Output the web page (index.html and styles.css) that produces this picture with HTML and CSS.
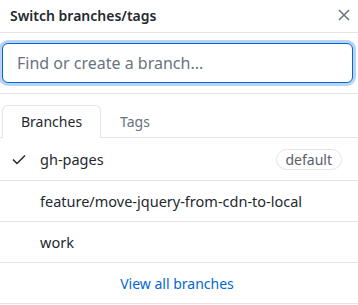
FILE: index.html
```html
<!DOCTYPE html>
<html lang="en">
<head>
  <meta charset="UTF-8">
  <title>Switch branches/tags</title>
  <link rel="stylesheet" href="styles.css">
</head>
<body>
  <div class="select-menu">
    <header class="menu-header">
      <span class="menu-title">Switch branches/tags</span>
      <button class="menu-close" aria-label="Close">
        <svg width="12" height="12" viewBox="0 0 12 12"><path d="M1 1 L11 11 M11 1 L1 11" stroke="currentColor" stroke-width="1.5" fill="none"/></svg>
      </button>
    </header>

    <div class="menu-filter">
      <input type="text" class="filter-input" placeholder="Find or create a branch..." autofocus>
    </div>

    <nav class="menu-tabs">
      <a class="tab selected">Branches</a>
      <a class="tab">Tags</a>
    </nav>

    <ul class="menu-list">
      <li class="menu-item">
        <svg class="check" width="16" height="16" viewBox="0 0 16 16"><path d="M2 8.5 L6 12.5 L14 4.5" stroke="currentColor" stroke-width="1.5" fill="none"/></svg>
        <span class="branch">gh-pages</span>
        <span class="label">default</span>
      </li>
      <li class="menu-item"><span class="branch">feature/move-jquery-from-cdn-to-local</span></li>
      <li class="menu-item"><span class="branch">work</span></li>
      <li class="menu-footer"><a href="#">View all branches</a></li>
    </ul>
  </div>
</body>
</html>
```

FILE: styles.css
```css
body {
  margin: 0;
  font-family: "Noto Sans", "Liberation Sans", sans-serif;
  font-size: 14px;
  color: #24292e;
  background: #fff;
}
.select-menu { width: 358px; }
.menu-header {
  display: flex;
  align-items: center;
  justify-content: space-between;
  height: 33px;
  box-sizing: border-box;
  padding: 0 8px 2px 10px;
  border-bottom: 1px solid #e1e4e8;
}
.menu-title { font-size: 14px; font-weight: 600; }
.menu-close {
  border: none;
  background: none;
  padding: 0;
  color: #6a737d;
  display: flex;
}
.menu-filter {
  padding: 10px 5px 10px 2px;
  border-bottom: 1px solid #e1e4e8;
}
.filter-input {
  display: block;
  width: 100%;
  height: 40px;
  box-sizing: border-box;
  padding: 0 14px;
  font-family: inherit;
  font-size: 16px;
  color: #24292e;
  border: 1px solid #0366d6;
  border-radius: 6px;
  box-shadow: 0 0 0 3px #b8d3f3;
  outline: none;
}
.filter-input::placeholder { color: #6a737d; }
.menu-tabs {
  display: flex;
  padding: 11px 0 0 2px;
  border-bottom: 1px solid #e1e4e8;
}
.tab {
  padding: 6px 18px 5px;
  line-height: 20px;
  margin-bottom: -1px;
  border: 1px solid transparent;
  border-radius: 6px 6px 0 0;
  color: #6a737d;
}
.tab.selected {
  color: #24292e;
  border-color: #e1e4e8;
  border-bottom-color: #fff;
  background: #fff;
}
.menu-list { list-style: none; margin: 0; padding: 0; }
.menu-item {
  display: flex;
  align-items: center;
  height: 41px;
  box-sizing: border-box;
  padding: 0 16px 0 40px;
  font-size: 14.5px;
  border-bottom: 1px solid #e1e4e8;
  position: relative;
}
.menu-item:first-child { height: 43px; }
.check { position: absolute; left: 11px; color: #24292e; }
.branch { flex: 1; }
.label {
  padding: 0 9px;
  font-size: 14px;
  line-height: 19px;
  border: 1px solid #e1e4e8;
  border-radius: 12px;
  color: #586069;
}
.menu-footer {
  height: 41px;
  box-sizing: border-box;
  display: flex;
  align-items: center;
  justify-content: center;
  border-bottom: 1px solid #e1e4e8;
  padding-right: 4px;
}
.menu-footer a { color: #0366d6; text-decoration: none; }
```
